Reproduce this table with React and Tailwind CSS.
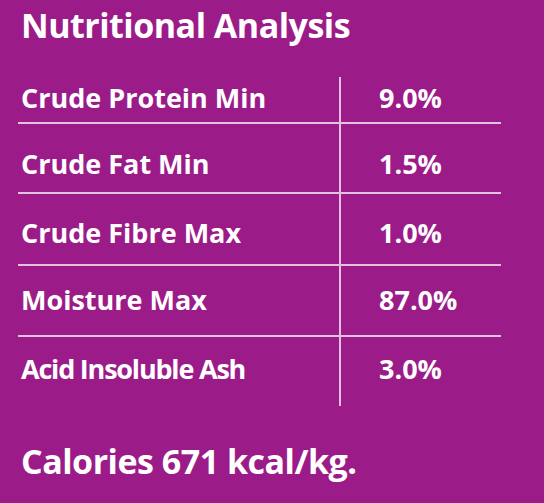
const rows = [
  { label: 'Crude Protein Min', value: '9.0%', cls: 'h-[45px] pt-[9px]', label2: '' },
  { label: 'Crude Fat Min', value: '1.5%', cls: 'h-[68px] pt-[28px]', label2: '' },
  { label: 'Crude Fibre Max', value: '1.0%', cls: 'h-[70px] pt-[27px]', label2: '' },
  { label: 'Moisture Max', value: '87.0%', cls: 'h-[69px] pt-[22px]', label2: '' },
  { label: 'Acid Insoluble Ash', value: '3.0%', cls: 'h-[69px] pt-[20px]', label2: 'tracking-[-1.2px]' },
];

export default function App() {
  return (
    <div
      className="w-[544px] h-[503px] bg-[#9b1c88] text-white overflow-hidden px-[18px]"
      style={{ fontFamily: '"Open Sans", sans-serif' }}
    >
      <h1 className="pl-[3px] pt-[4px] text-[34px] leading-[42px] font-bold tracking-[-0.5px]">
        Nutritional Analysis
      </h1>

      <div className="mt-[31px] w-[483px]">
        {rows.map((r, i) => (
          <div
            key={r.label}
            className={`grid grid-cols-[321px_1fr] ${i < rows.length - 1 ? 'border-b-2 border-[#e4c2de]' : ''}`}
          >
            <div className={`${r.cls} ${r.label2} pl-[3px] text-[27px] leading-[24px] font-bold`}>{r.label}</div>
            <div className={`${r.cls} border-l-2 border-[#e4c2de] pl-[38px] text-[27px] leading-[24px] font-bold`}>
              {r.value}
            </div>
          </div>
        ))}
      </div>

      <p className="pl-[3px] mt-[35px] text-[34px] leading-[40px] font-bold tracking-[-0.5px]">Calories 671 kcal/kg.</p>
    </div>
  );
}
